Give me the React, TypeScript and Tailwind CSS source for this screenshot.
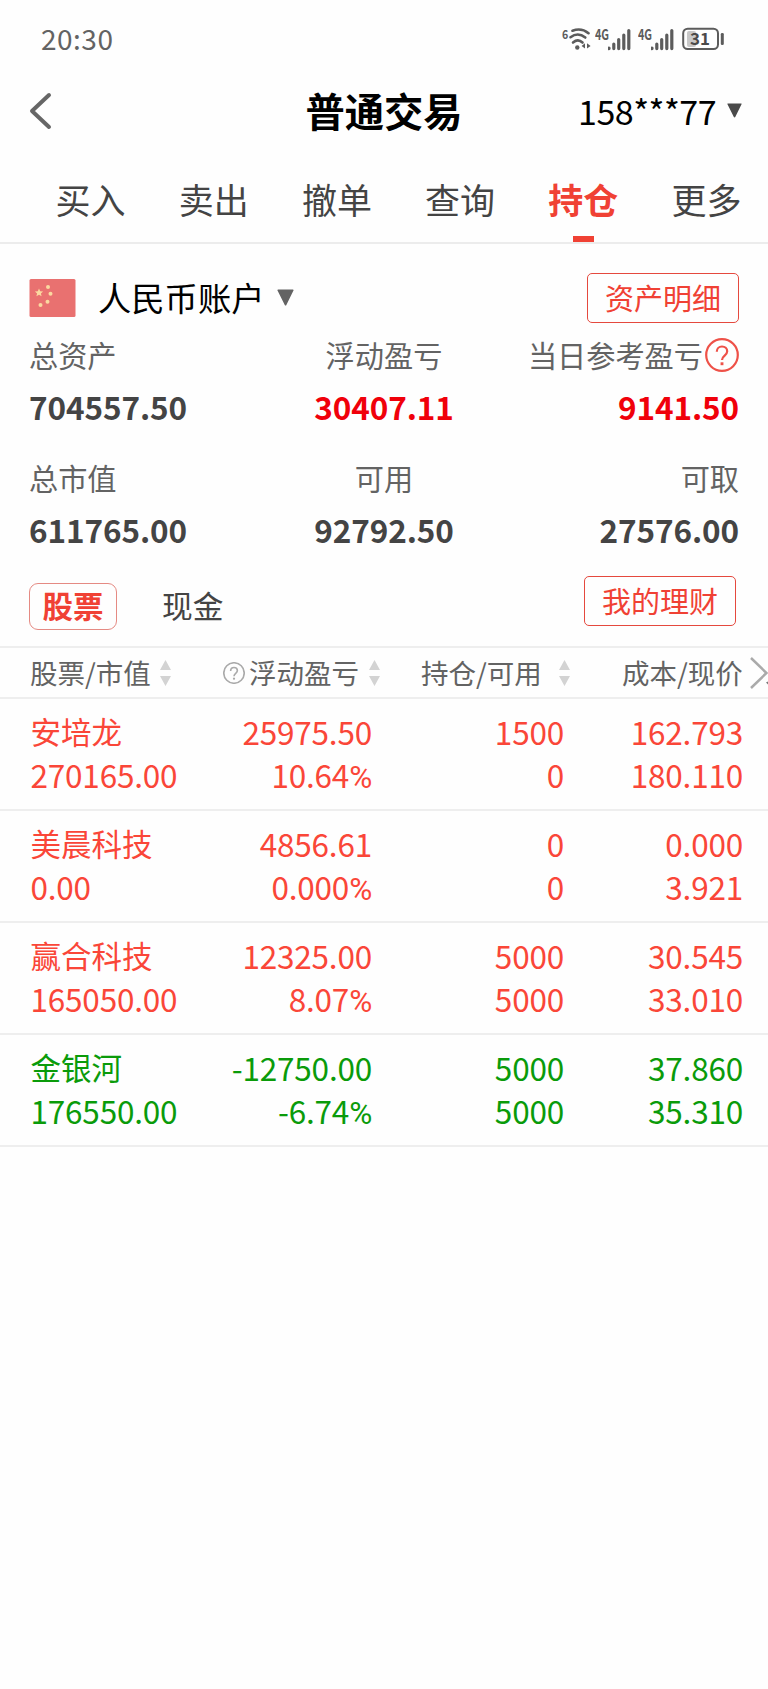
const tabs = ["买入", "卖出", "撤单", "查询", "持仓", "更多"];

const summary = [
  { label: "总资产", value: "704557.50", align: "items-start", color: "text-[#444]" },
  { label: "浮动盈亏", value: "30407.11", align: "items-center", color: "text-[#f0000a]" },
  { label: "当日参考盈亏", value: "9141.50", align: "items-end", color: "text-[#f0000a]", help: true },
  { label: "总市值", value: "611765.00", align: "items-start", color: "text-[#444]" },
  { label: "可用", value: "92792.50", align: "items-center", color: "text-[#444]" },
  { label: "可取", value: "27576.00", align: "items-end", color: "text-[#444]" },
];

const holdings = [
  { name: "安培龙", marketValue: "270165.00", profit: "25975.50", rate: "10.64", held: "1500", usable: "0", cost: "162.793", price: "180.110" },
  { name: "美晨科技", marketValue: "0.00", profit: "4856.61", rate: "0.000", held: "0", usable: "0", cost: "0.000", price: "3.921" },
  { name: "赢合科技", marketValue: "165050.00", profit: "12325.00", rate: "8.07", held: "5000", usable: "5000", cost: "30.545", price: "33.010" },
  { name: "金银河", marketValue: "176550.00", profit: "-12750.00", rate: "-6.74", held: "5000", usable: "5000", cost: "37.860", price: "35.310" },
];

function Signal() {
  return (
    <div className="flex h-[24px] w-[37px] items-start text-[#5c5c5c]">
      <span className="w-[13px] origin-left scale-x-[0.72] text-[15px] font-bold leading-[13px]">4G</span>
      <svg width="24" height="24" viewBox="13 0 24 24" className="shrink-0">
        <path d="M14 21v.6M18.800 17v4.600M23.700 12.500v9.100M28.800 8v13.600M33.800 3.500v18.100" stroke="currentColor" strokeWidth="3.200" strokeLinecap="round" />
      </svg>
    </div>
  );
}

function StatusBar() {
  return (
    <div className="flex h-[76px] items-center justify-between pl-[41px] pr-[42px]">
      <span className="-mt-px text-[28px] leading-[42px] tracking-[0.5px] text-[#636363]">20:30</span>
      <div className="flex items-center pt-px">
        <span className="h-[24px] w-[6px] origin-left scale-x-[0.85] text-[12.500px] font-bold leading-[13px] text-[#5c5c5c]">6</span>
        <svg width="27" height="24" viewBox="6 0 27 24">
          <g fill="none" stroke="#5c5c5c" strokeWidth="2.600" strokeLinecap="round">
            <path d="M10.500 3.700Q19.500 .5 26.500 6.200" />
            <path d="M8.500 10.200Q16 4.600 23.300 10.500" />
            <path d="M11 15.500Q16 11.300 20.500 15.500" />
          </g>
          <circle cx="15.300" cy="20.500" r="2.200" fill="#5c5c5c" />
          <path d="M23 16.200v5.400l-3.400-2.700zM25 16.200v5.400l3.600-2.700z" fill="#5c5c5c" />
        </svg>
        <Signal />
        <span className="w-[6px]" />
        <Signal />
        <svg width="44" height="24" viewBox="0 0 44 24" className="ml-[7px]">
          <rect x="5" y="4" width="9" height="16" rx="2" fill="#c8c8c8" />
          <rect x="1.200" y="1.700" width="34.800" height="20.300" rx="4.500" fill="none" stroke="#5c5c5c" strokeWidth="2" />
          <rect x="38.800" y="6" width="3" height="12" rx="1.300" fill="#5c5c5c" />
          <text x="8" y="17.700" fontSize="16.500" fontWeight="700" fill="#4a4a4a" textLength="20" lengthAdjust="spacingAndGlyphs">31</text>
        </svg>
      </div>
    </div>
  );
}

function Caret({ className }: { className: string }) {
  return (
    <svg viewBox="0 0 16 16" preserveAspectRatio="none" className={className}>
      <path d="M1 .5h14a.6.6 0 0 1 .5.9L8.800 15a.8.8 0 0 1-1.500 0L.5 1.400A.6.6 0 0 1 1 .5z" fill="currentColor" />
    </svg>
  );
}

function HelpIcon({ size, strokeWidth }: { size: number; strokeWidth: number }) {
  return (
    <svg width={size} height={size} viewBox="0 0 34 34" fill="none" stroke="currentColor" strokeWidth={strokeWidth} className="shrink-0">
      <circle cx="17" cy="17" r="15.800" />
      <path d="M11.800 13.800c0-3.300 2.200-5.300 5.200-5.300s5.200 2 5.200 4.800c0 4.200-5.200 4.300-5.200 8.700" />
      <path d="M17 24.300v2.900" strokeWidth={strokeWidth * 1.3} />
    </svg>
  );
}

function SortIcon() {
  return (
    <svg width="11" height="26" viewBox="0 0 11 26" fill="#d3d3d3" className="shrink-0">
      <path d="M5.500 0L11 10H0zM0 16h11L5.500 26z" />
    </svg>
  );
}

export default function App() {
  return (
    <div className="min-h-[1689px] w-[768px] overflow-hidden bg-[#fefefe] font-['Noto_Sans_CJK_SC',sans-serif]">
      <StatusBar />

      {/* Header */}
      <header className="grid h-[70px] grid-cols-3 items-center pl-[29px] pr-[26px]">
        <svg width="24" height="38" viewBox="0 0 24 38" fill="none" stroke="#666" strokeWidth="4" strokeLinecap="round" strokeLinejoin="round">
          <path d="M20 3L3 19l17 16" />
        </svg>
        <h1 className="-ml-[3px] -mt-[3px] whitespace-nowrap text-center text-[39.300px] font-bold leading-[58px] text-black">普通交易</h1>
        <div className="flex items-center justify-end">
          <span className="text-[34px] leading-[50px] tracking-[-0.5px] text-black">158***77</span>
          <Caret className="-mt-[2px] ml-[11px] h-[15px] w-[15px] text-[#4a4a4a]" />
        </div>
      </header>

      {/* Trade tabs */}
      <nav className="flex h-[98px] border-b-2 border-[#ececec] pl-[29px]">
        {tabs.map((tab) => (
          <div key={tab} className="flex flex-1 flex-col items-center justify-between pt-[27px]">
            <span className={`text-[35px] leading-[52px] ${tab === "持仓" ? "font-bold text-[#f04134]" : "text-[#444]"}`}>{tab}</span>
            {tab === "持仓" && <span className="h-[6px] w-[21px] bg-[#f04134]" />}
          </div>
        ))}
      </nav>

      {/* Account */}
      <section className="pl-[29px] pr-[29px] pt-[29px]">
        <div className="flex h-[50px] items-center">
          <svg width="47" height="38" viewBox="0 0 47 38">
            <rect x=".5" width="46" height="38" rx="1.500" fill="#e97170" />
            <g fill="#fbd9a0">
              <path d="M10 9.500l1.200 2.700 2.900.3-2.200 1.900.7 2.900L10 15.800l-2.600 1.500.7-2.900-2.200-1.900 2.900-.3z" />
              <circle cx="19" cy="8" r="2" />
              <circle cx="21.500" cy="14.800" r="2" />
              <circle cx="18.500" cy="22.800" r="2" />
              <circle cx="11.500" cy="26" r="2" />
            </g>
          </svg>
          <span className="-mt-[3px] ml-[22px] text-[33.300px] leading-[50px] text-black">人民币账户</span>
          <Caret className="-mt-[2px] ml-[13px] h-[17px] w-[17px] text-[#636363]" />
          <button className="ml-auto h-[50px] w-[152px] rounded-[5px] border border-[#e5493e] text-[29px] leading-[46px] text-[#f04134]">
            <span className="block h-[48px]">资产明细</span>
          </button>
        </div>

        <div className="mt-[7px] grid grid-cols-3">
          {summary.map((item) => (
            <div key={item.label} className={`flex h-[123px] flex-col ${item.align}`}>
              <div className="flex h-[51px] items-start whitespace-nowrap text-[29.200px] leading-[48px] text-[#636363]">
                {item.label}
                {item.help && (
                  <span className="ml-[2px] mt-[8px] text-[#ee5148]">
                    <HelpIcon size={34} strokeWidth={2.2} />
                  </span>
                )}
              </div>
              <div className={`text-[31.500px] font-bold leading-[50px] tracking-[-0.100px] ${item.color}`}>{item.value}</div>
            </div>
          ))}
        </div>
      </section>

      {/* Asset type */}
      <div className="flex h-[70px] items-start pl-[29px] pr-[32px]">
        <button className="mt-[7px] h-[47px] w-[88px] rounded-[9px] border border-[#e58a83] text-[30.500px] font-bold leading-[43px] text-[#f04134]">
          <span className="block h-[45px]">股票</span>
        </button>
        <span className="ml-[45px] mt-[6px] text-[30.700px] leading-[46px] text-[#444]">现金</span>
        <button className="ml-auto h-[50px] w-[152px] rounded-[5px] border border-[#e5493e] text-[29px] leading-[46px] text-[#f04134]">
          <span className="block h-[48px]">我的理财</span>
        </button>
      </div>

      {/* Holdings */}
      <div className="flex h-[53px] items-center border-y-2 border-[#eee] pl-[30px] text-[27.500px] leading-[48px] text-[#636363]">
        <span className="h-[49px] w-[130px]">股票/市值</span>
        <SortIcon />
        <span className="ml-[52px] mr-[4px] text-[#aaa]">
          <HelpIcon size={22} strokeWidth={2.5} />
        </span>
        <span className="h-[49px] w-[120px]">浮动盈亏</span>
        <SortIcon />
        <span className="ml-[41px] h-[49px] w-[138px]">持仓/可用</span>
        <SortIcon />
        <span className="ml-[52px] h-[49px] w-[128px]">成本/现价</span>
        <svg width="18" height="32" viewBox="0 0 18 32" fill="none" className="shrink-0">
          <path d="M1 1l15.500 15L1 31" stroke="#aaa" strokeWidth="2.500" />
          <path d="M16 25.500l2-1v3z" fill="#777" />
        </svg>
      </div>

      {holdings.map((row) => (
        <div
          key={row.name}
          className={`grid h-[112px] grid-cols-[190px_182px_192px_179px] border-b-2 border-[#eee] pt-[11px] text-[31.500px] leading-[42.500px] tracking-[-0.200px] ${row.profit.startsWith("-") ? "text-[#0a9b0a]" : "text-[#fa4638]"}`}
        >
          <div className="pl-[30.500px]">
            <div className="text-[30.500px] tracking-normal">{row.name}</div>
            <div>{row.marketValue}</div>
          </div>
          <div className="text-right">
            <div>{row.profit}</div>
            <div>
              {row.rate}
              <span className="font-[Roboto]">%</span>
            </div>
          </div>
          <div className="text-right">
            <div>{row.held}</div>
            <div>{row.usable}</div>
          </div>
          <div className="text-right">
            <div>{row.cost}</div>
            <div>{row.price}</div>
          </div>
        </div>
      ))}
    </div>
  );
}
